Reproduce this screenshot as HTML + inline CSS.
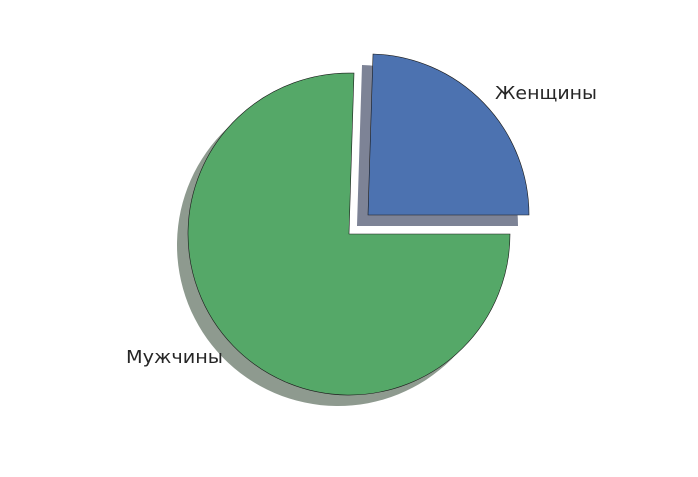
<!DOCTYPE html>
<html><head><meta charset="utf-8"><style>html,body{margin:0;padding:0;background:#fff;width:698px;height:477px;overflow:hidden}</style></head>
<body>
<svg width="698" height="477" viewBox="0 0 698 477" xmlns="http://www.w3.org/2000/svg">
<path d="M338,245 L343,84.1 A161,161 0 1,0 499,245 Z" fill="#8e9a8f"/>
<path d="M357,226 L518,226 A161,161 0 0,0 362,65 Z" fill="#7d8396"/>
<path d="M349,234 L354,73.1 A161,161 0 1,0 510,234 Z" fill="#55a868" stroke="#1a1a1a" stroke-width="0.6"/>
<path d="M368,215 L529,215 A161,161 0 0,0 373,54 Z" fill="#4c72b0" stroke="#1a1a1a" stroke-width="0.6"/>
<text x="495" y="99" font-family="DejaVu Sans, sans-serif" font-size="18" fill="#262626" textLength="102" lengthAdjust="spacingAndGlyphs">Женщины</text>
<text x="126" y="363" font-family="DejaVu Sans, sans-serif" font-size="18" fill="#262626" textLength="97" lengthAdjust="spacingAndGlyphs">Мужчины</text>
</svg>
</body></html>
